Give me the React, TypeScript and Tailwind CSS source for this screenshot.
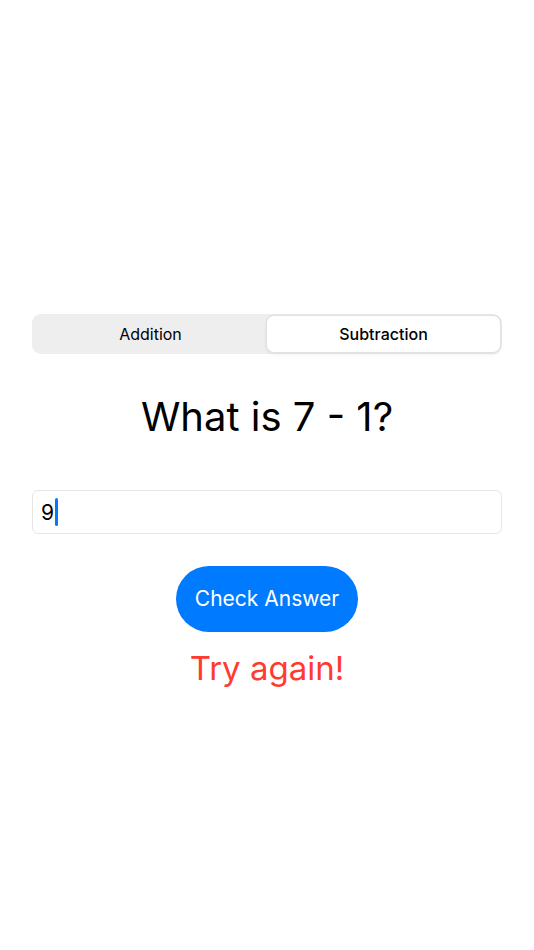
import { useState } from "react";

const App = () => {
  const [mode, setMode] = useState<"add" | "sub">("sub");
  const answer = "9";

  return (
    <div className="min-h-[950px] w-full bg-white font-['Inter',sans-serif] text-black">
      <div className="flex flex-col items-center px-8 pt-[314px]">
        {/* Segmented control */}
        <div className="flex h-10 w-full rounded-[9px] bg-[#eeeeef] p-[2px]">
          <button
            onClick={() => setMode("add")}
            className={`flex-1 rounded-[7px] text-[16px] ${
              mode === "add"
                ? "bg-white font-medium shadow-[0_0_0_1.5px_#e2e2e4,0_2px_4px_rgba(0,0,0,0.08)]"
                : "font-normal"
            }`}
          >
            Addition
          </button>
          <button
            onClick={() => setMode("sub")}
            className={`flex-1 rounded-[7px] text-[16px] ${
              mode === "sub"
                ? "bg-white font-medium shadow-[0_0_0_1.5px_#e2e2e4,0_2px_4px_rgba(0,0,0,0.08)]"
                : "font-normal"
            }`}
          >
            Subtraction
          </button>
        </div>

        <h1 className="mt-[39px] text-[40px] leading-[48px] font-normal">
          What is 7 - 1?
        </h1>

        {/* Answer field with caret */}
        <div className="mt-[49px] flex h-11 w-full items-center rounded-[6px] border border-[#e6e6e8] px-2">
          <span className="text-[21px] leading-none">{answer}</span>
          <span className="ml-px h-7 w-[3px] rounded-full bg-[#007aff]" />
        </div>

        <button className="mt-8 h-[66px] w-[182px] rounded-full bg-[#007aff] text-[21px] text-white">
          Check Answer
        </button>

        <p className="mt-[14px] text-[33px] leading-[44px] text-[#ff3b30]">
          Try again!
        </p>
      </div>
    </div>
  );
};

export default App;
